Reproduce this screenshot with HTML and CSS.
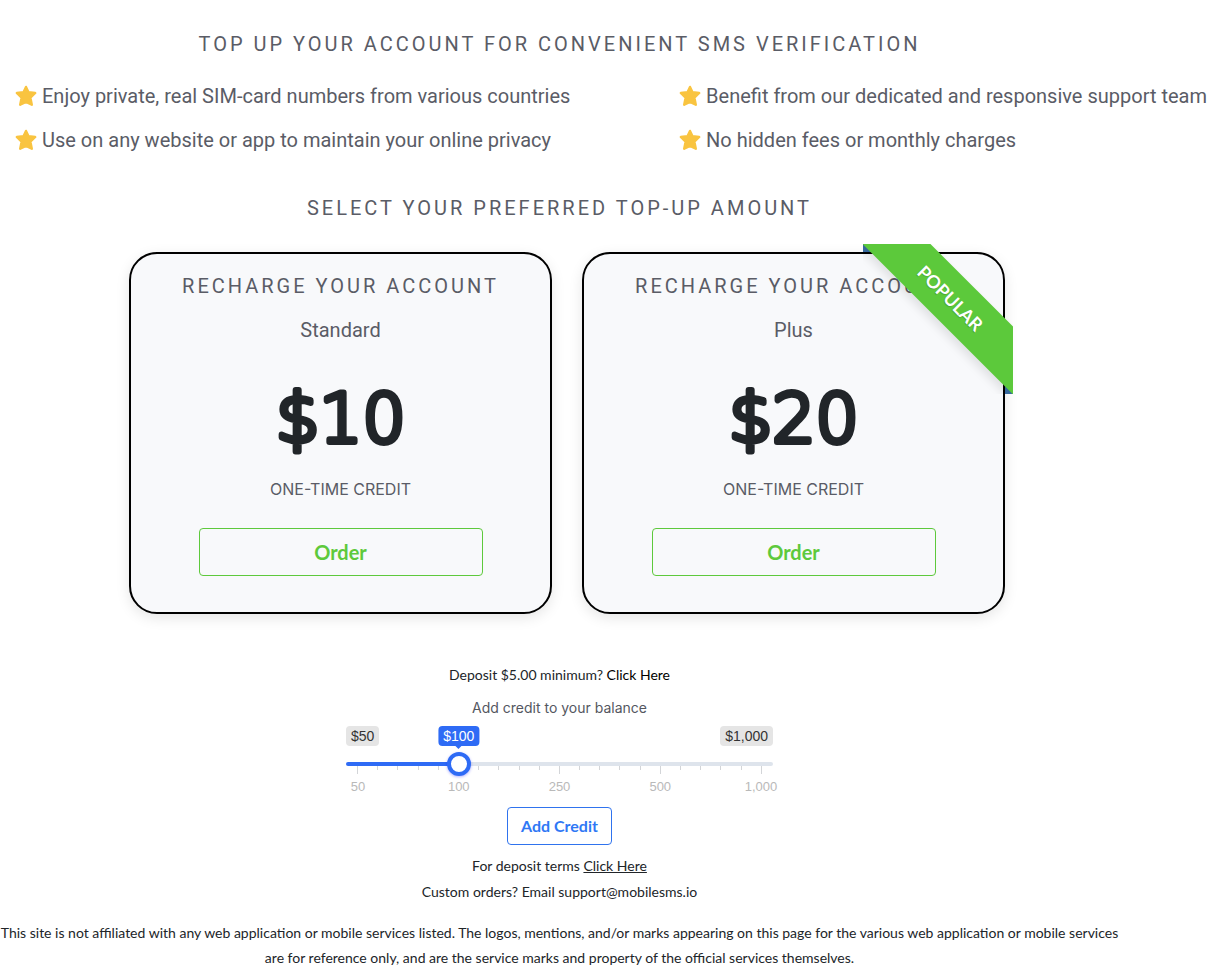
FILE: index.html
```html
<!DOCTYPE html>
<html lang="en">
<head>
<meta charset="utf-8">
<meta name="viewport" content="width=device-width, initial-scale=1">
<title>Top up your account</title>
<link rel="stylesheet" href="styles.css">
</head>
<body>
<svg class="sprite" aria-hidden="true">
  <symbol id="star" viewBox="0 0 22 22"><path d="M11 1.9 13.5 7.2 20.2 8 15.4 12.7 16.8 19.8 11 16.9 5.2 19.8 6.6 12.7 1.8 8 8.5 7.2Z" fill="#f9c440" stroke="#f9c440" stroke-width="2.4" stroke-linejoin="round"/></symbol>
</svg>
<main class="page">
  <h1 class="heading">Top up your account for convenient SMS verification</h1>
  <div class="features">
    <ul class="feature-list">
      <li class="feature"><svg class="star"><use href="#star"/></svg>Enjoy private, real SIM-card numbers from various countries</li>
      <li class="feature"><svg class="star"><use href="#star"/></svg>Use on any website or app to maintain your online privacy</li>
    </ul>
    <ul class="feature-list">
      <li class="feature"><svg class="star"><use href="#star"/></svg>Benefit from our dedicated and responsive support team</li>
      <li class="feature"><svg class="star"><use href="#star"/></svg>No hidden fees or monthly charges</li>
    </ul>
  </div>
  <h2 class="heading">Select your preferred top-up amount</h2>
  <div class="cards">
    <section class="card">
      <h3 class="heading">Recharge your account</h3>
      <p class="plan">Standard</p>
      <svg class="price" viewBox="0 0 180 88"><text x="90" y="66" text-anchor="middle">$10</text></svg>
      <p class="note">ONE-TIME CREDIT</p>
      <button class="order" type="button">Order</button>
    </section>
    <section class="card">
      <h3 class="heading">Recharge your account</h3>
      <p class="plan">Plus</p>
      <svg class="price" viewBox="0 0 180 88"><text x="90" y="66" text-anchor="middle">$20</text></svg>
      <p class="note">ONE-TIME CREDIT</p>
      <button class="order" type="button">Order</button>
      <div class="ribbon"><span class="ribbon-band">Popular</span></div>
    </section>
  </div>
  <p class="small">Deposit $5.00 minimum? <a class="link-dark" href="#deposit">Click Here</a></p>
  <form class="credit">
    <label class="credit-label" for="amount">Add credit to your balance</label>
    <div class="badges">
      <span class="badge">$50</span>
      <output class="badge badge-current" for="amount">$100</output>
      <span class="badge">$1,000</span>
    </div>
    <input class="slider" id="amount" type="range" min="0" max="4" step="1" value="1">
    <div class="ticks">
      <i class="tick"></i><i class="tick"></i><i class="tick"></i><i class="tick"></i><i class="tick"></i><i class="tick"></i><i class="tick"></i><i class="tick"></i><i class="tick"></i><i class="tick"></i><i class="tick"></i><i class="tick"></i><i class="tick"></i><i class="tick"></i><i class="tick"></i><i class="tick"></i><i class="tick"></i><i class="tick"></i><i class="tick"></i><i class="tick"></i><i class="tick"></i>
    </div>
    <div class="scale"><span class="mark">50</span><span class="mark">100</span><span class="mark">250</span><span class="mark">500</span><span class="mark">1,000</span></div>
    <button class="add" type="button">Add Credit</button>
  </form>
  <p class="small">For deposit terms <a class="link-line" href="#terms">Click Here</a></p>
  <p class="small">Custom orders? Email support@mobilesms.io</p>
  <footer class="footer">This site is not affiliated with any web application or mobile services listed. The logos, mentions, and/or marks appearing on this page for the various web application or mobile services are for reference only, and are the service marks and property of the official services themselves.</footer>
</main>
</body>
</html>
```
FILE: styles.css
```css
* { box-sizing: border-box; margin: 0; padding: 0; }
body {
  background: #fff;
  color: #212529;
  font-family: Lato, "Liberation Sans", sans-serif;
  font-size: 14px;
}
.sprite { display: none; }
.page {
  margin-right: 102px;
  padding-top: 22px;
  text-align: center;
}
.heading, .feature, .plan, .note {
  color: #5a5c66;
  font-family: Roboto, "Liberation Sans", sans-serif;
  font-weight: 400;
}
.heading {
  font-size: 20px;
  line-height: 44px;
  letter-spacing: 3px;
  text-transform: uppercase;
}
.features {
  display: flex;
  justify-content: space-between;
  margin: 8px -102px 24px 0;
  padding: 0 14px 0 15px;
}
.feature-list { list-style: none; }
.feature {
  display: flex;
  align-items: center;
  gap: 5px;
  font-size: 20px;
  line-height: 44px;
  white-space: nowrap;
}
.star { width: 22px; height: 22px; }
.cards {
  display: flex;
  justify-content: center;
  gap: 30px;
  margin: 22px 0 48px;
  padding-left: 15px;
}
.card {
  position: relative;
  flex: 0 1 423px;
  padding: 10px 20px 36px;
  background: #f8f9fb;
  border: 2px solid #000;
  border-radius: 28px;
  box-shadow: 0 4px 14px rgba(0, 0, 0, 0.1);
}
.card .heading { white-space: nowrap; }
.plan { font-size: 20px; line-height: 44px; }
.price {
  display: block;
  width: 180px;
  height: 88px;
  margin: 24px auto 13px;
  fill: #212529;
  stroke: #212529;
  stroke-width: 6px;
  stroke-linejoin: round;
  font: 200 68px "DejaVu Sans", sans-serif;
}
.note {
  margin-bottom: 27px;
  font-family: Inter, "Liberation Sans", sans-serif;
  font-size: 16px;
  line-height: 24px;
}
.order {
  width: 284px;
  max-width: 100%;
  height: 48px;
  color: #5ec93c;
  background: transparent;
  border: 1px solid #5ec93c;
  border-radius: 4px;
  font: 700 20px Lato, sans-serif;
}
.ribbon {
  position: absolute;
  top: -10px;
  right: -10px;
  width: 150px;
  height: 150px;
  overflow: hidden;
}
.ribbon::before, .ribbon::after {
  content: "";
  position: absolute;
  width: 8px;
  height: 8px;
  background: #3b70a8;
}
.ribbon::before { top: 0; left: 0; }
.ribbon::after { right: 0; bottom: 0; }
.ribbon-band {
  position: absolute;
  z-index: 1;
  top: 30px;
  left: -25px;
  width: 225px;
  padding: 15px 0;
  background: #5cc93b;
  box-shadow: 0 5px 10px rgba(0, 0, 0, 0.1);
  color: #fff;
  font-size: 18px;
  font-weight: 700;
  line-height: 18px;
  text-shadow: 0 1px 1px rgba(0, 0, 0, 0.2);
  text-transform: uppercase;
  transform: rotate(45deg);
}
.small { line-height: 26px; }
.small .link-dark { color: #000; text-decoration: none; }
.small .link-line { color: #212529; text-decoration: underline; }
.small + .small { margin-bottom: 15px; }
.credit {
  width: 427px;
  max-width: 100%;
  margin: 10px auto 8px;
  font-family: Inter, "Liberation Sans", sans-serif;
}
.credit-label {
  display: block;
  color: #54575f;
  line-height: 20px;
}
.badges {
  display: flex;
  justify-content: space-between;
  position: relative;
  margin-top: 8px;
}
.badge {
  padding: 0 5px;
  background: #e5e5e5;
  border-radius: 4px;
  color: #333;
  font-family: "Liberation Sans", sans-serif;
  font-size: 14px;
  line-height: 20px;
}
.badge-current {
  position: absolute;
  left: calc(12px + (100% - 24px) / 4);
  transform: translateX(-50%);
  background: #2e6bf5;
  color: #fff;
}
.badge-current::after {
  content: "";
  position: absolute;
  top: 20px;
  left: 50%;
  margin-left: -3px;
  border: 3px solid transparent;
  border-top-color: #2e6bf5;
}
.slider {
  display: block;
  position: relative;
  z-index: 1;
  width: 100%;
  height: 24px;
  margin-top: 6px;
  appearance: none;
  background: transparent;
}
.slider::-webkit-slider-runnable-track {
  height: 4px;
  border-radius: 2px;
  background: linear-gradient(to right, #2e6bf5 26%, #dee4ec 26%);
}
.slider::-webkit-slider-thumb {
  appearance: none;
  width: 24px;
  height: 24px;
  margin-top: -10px;
  background: #fff;
  border: 4px solid #2e6bf5;
  border-radius: 50%;
  box-shadow: 0 1px 3px rgba(0, 0, 255, 0.3);
}
.ticks {
  display: flex;
  justify-content: space-between;
  height: 8px;
  margin-top: -10px;
  padding: 0 11px;
}
.tick { width: 1px; height: 4px; background: #d3d5d8; }
.tick:nth-child(5n + 1) { height: 8px; }
.scale {
  display: flex;
  justify-content: space-between;
  padding: 0 12px;
  color: #b9b9b9;
  font-family: "Liberation Sans", sans-serif;
  font-size: 13px;
  line-height: 25px;
}
.mark { display: flex; justify-content: center; width: 0; }
.add {
  height: 38px;
  margin-top: 8px;
  padding: 0 13px 2px;
  background: #fff;
  border: 1px solid #2f73ee;
  border-radius: 4px;
  color: #2f78f5;
  font: 700 16px Lato, sans-serif;
}
.footer { line-height: 25px; }
```
